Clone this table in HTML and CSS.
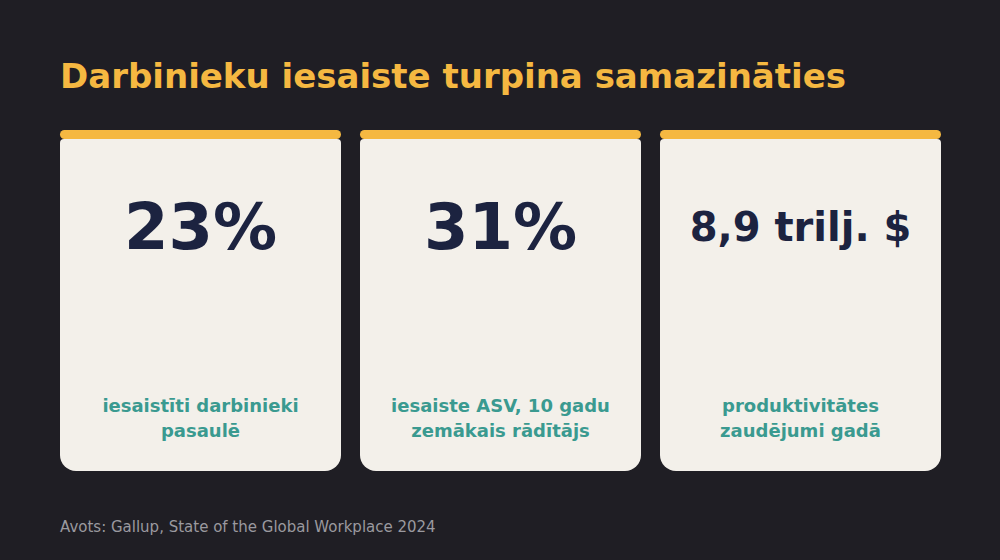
FILE: index.html
```html
<!DOCTYPE html>
<html lang="lv">
<head>
<meta charset="utf-8">
<link rel="stylesheet" href="styles.css">
</head>
<body>
<main class="page">
  <h1 class="title">Darbinieku iesaiste turpina samazināties</h1>
  <section class="cards">
    <article class="card">
      <div class="card-bar"></div>
      <div class="card-body">
        <div class="stat"><span class="stat-value">23%</span></div>
        <p class="stat-label">iesaistīti darbinieki pasaulē</p>
      </div>
    </article>
    <article class="card">
      <div class="card-bar"></div>
      <div class="card-body">
        <div class="stat"><span class="stat-value">31%</span></div>
        <p class="stat-label">iesaiste ASV, 10 gadu zemākais rādītājs</p>
      </div>
    </article>
    <article class="card">
      <div class="card-bar"></div>
      <div class="card-body">
        <div class="stat"><span class="stat-value stat-value--small">8,9 trilj. $</span></div>
        <p class="stat-label">produktivitātes zaudējumi gadā</p>
      </div>
    </article>
  </section>
  <p class="source">Avots: Gallup, State of the Global Workplace 2024</p>
</main>
</body>
</html>
```
FILE: styles.css
```css
html, body {
  margin: 0;
  padding: 0;
  background: #1f1e24;
}
body {
  width: 1000px;
  height: 560px;
  overflow: hidden;
  font-family: "DejaVu Sans", sans-serif;
}
.page {
  padding: 56px 60px 0;
}
.title {
  margin: 0;
  font-size: 34px;
  line-height: 40.8px;
  font-weight: 700;
  color: #f5b841;
}
.cards {
  margin-top: 33px;
  display: grid;
  grid-template-columns: repeat(3, 281px);
  gap: 19px;
  height: 341px;
}
.card {
  display: flex;
  flex-direction: column;
}
.card-bar {
  height: 9px;
  border-radius: 4.5px;
  background: #f5b841;
}
.card-body {
  flex: 1;
  display: flex;
  flex-direction: column;
  align-items: center;
  background: #f3f0ea;
  border-radius: 4px 4px 16px 16px;
  padding: 48px 20px 27px;
}
.stat {
  height: 80px;
  display: flex;
  align-items: center;
  justify-content: center;
}
.stat-value {
  font-size: 64px;
  line-height: 80px;
  font-weight: 700;
  color: #1c2340;
  white-space: nowrap;
}
.stat-value--small {
  font-size: 40px;
}
.stat-label {
  margin: auto 0 0;
  text-align: center;
  font-size: 18px;
  line-height: 25.5px;
  font-weight: 700;
  color: #3a9a90;
}
.source {
  margin: 47px 0 0;
  font-size: 15px;
  line-height: 18px;
  color: #9a999f;
}
```
